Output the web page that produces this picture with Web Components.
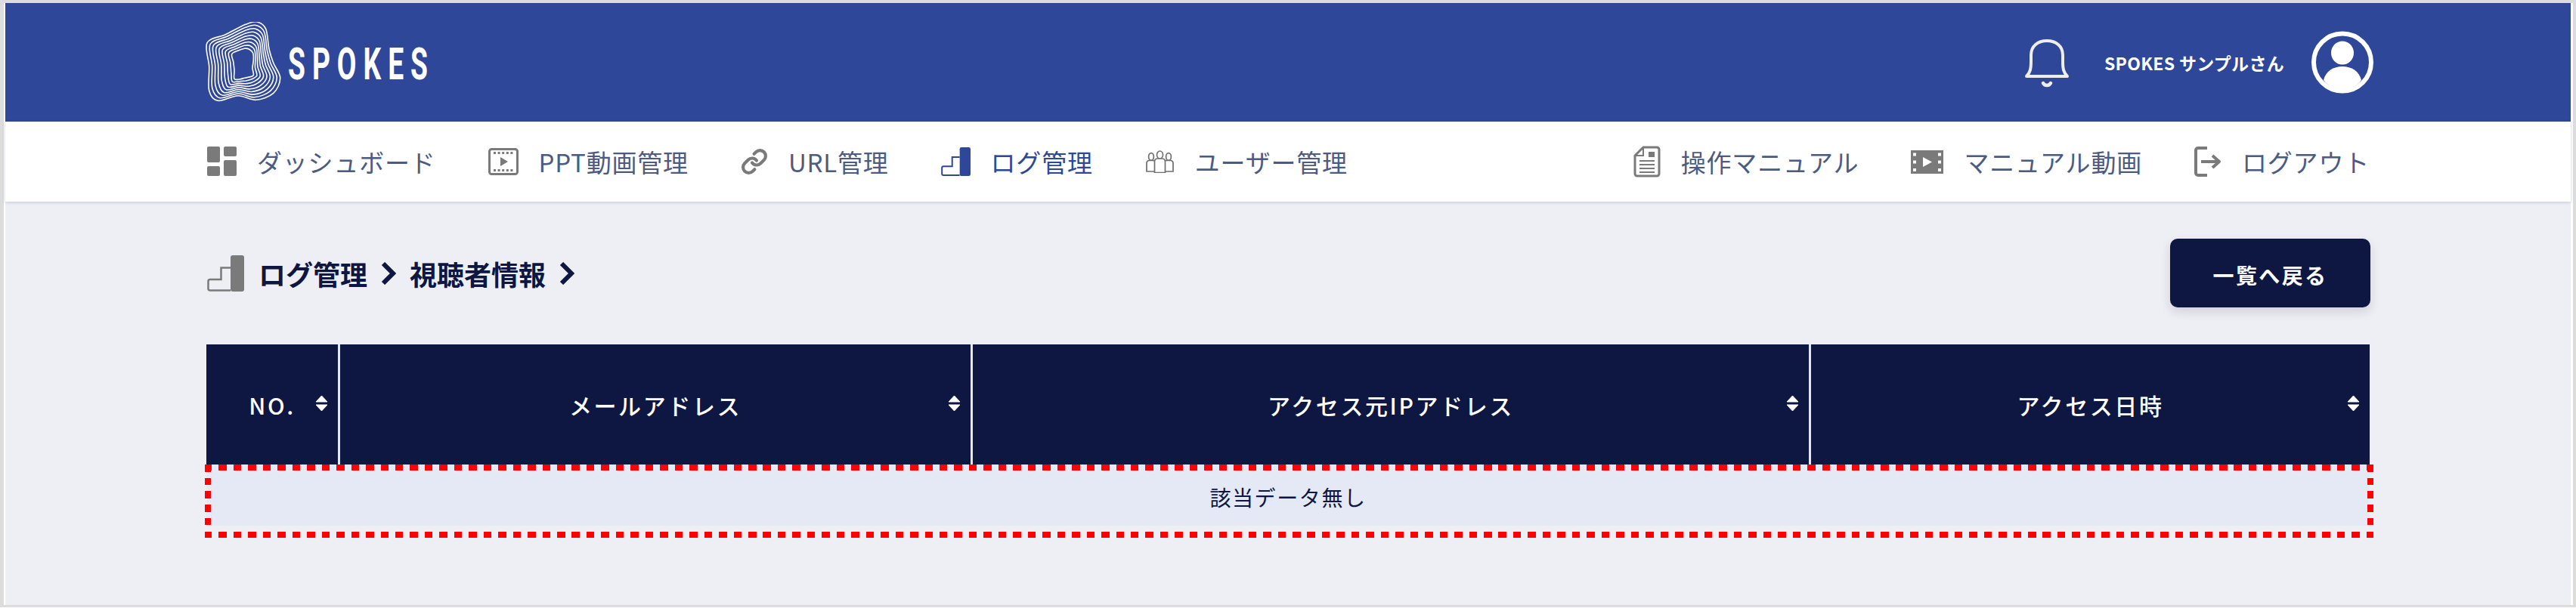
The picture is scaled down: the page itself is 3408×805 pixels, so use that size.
<!DOCTYPE html>
<html lang="ja">
<head>
<meta charset="utf-8">
<title>SPOKES</title>
<style>
    html, body {
        margin: 0;
        height: 805px;
        overflow: hidden;
        background: #fff;
        font-family: "Noto Sans CJK JP", "Noto Sans", sans-serif;
    }
</style>
</head>
<body>
<app-shell>
    <app-header></app-header>
    <app-nav>
        <nav-item icon="dashboard">ダッシュボード</nav-item>
        <nav-item icon="film">PPT動画管理</nav-item>
        <nav-item icon="link">URL管理</nav-item>
        <nav-item icon="steps" active>ログ管理</nav-item>
        <nav-item icon="users">ユーザー管理</nav-item>
        <nav-item icon="doc" slot="right">操作マニュアル</nav-item>
        <nav-item icon="video" slot="right">マニュアル動画</nav-item>
        <nav-item icon="logout" slot="right">ログアウト</nav-item>
    </app-nav>
    <log-page></log-page>
</app-shell>

<script>
const ICONS = {
    dashboard: `<svg width="39" height="40" viewBox="0 0 39 40" fill="#7a7a7a">
        <rect x="0" y="0" width="17" height="21" rx="2"/><rect x="22" y="0" width="17" height="13" rx="2"/>
        <rect x="0" y="26" width="17" height="13" rx="2"/><rect x="22" y="18" width="17" height="21" rx="2"/></svg>`,
    film: `<svg width="40" height="36" viewBox="0 0 40 36">
        <rect x="1.5" y="1.5" width="37" height="33" rx="3" fill="none" stroke="#7a7a7a" stroke-width="3"/>
        <path d="M7 6.5h26M7 29.5h26" stroke="#7a7a7a" stroke-width="3" stroke-dasharray="3 2.6"/>
        <path d="M16 12l10 6-10 6z" fill="#7a7a7a"/></svg>`,
    link: `<svg width="36" height="38" viewBox="0 0 24 25" fill="none" stroke="#7a7a7a" stroke-width="2.8" stroke-linecap="round" stroke-linejoin="round">
        <path d="M10 13.5a5 5 0 0 0 7.54.54l3-3a5 5 0 0 0-7.07-7.07l-1.72 1.71"/>
        <path d="M14 11.5a5 5 0 0 0-7.54-.54l-3 3a5 5 0 0 0 7.07 7.07l1.71-1.71"/></svg>`,
    steps: `<svg width="39" height="40" viewBox="0 0 49 48">
        <rect x="31" y="0" width="18" height="48" rx="3" fill="currentColor"/>
        <path d="M31 16.5H18.5v15.5H4a2.5 2.5 0 0 0-2.5 2.5V44A2.5 2.5 0 0 0 4 46.5h27" fill="none" stroke="currentColor" stroke-width="2.5"/></svg>`,
    users: `<svg width="39" height="30" viewBox="0 0 39 30" fill="#fff" stroke="#6f6f6f" stroke-width="1.7">
        <ellipse cx="8" cy="8.500" rx="3.400" ry="4.800"/><path d="M2 28V17q0-3 3-3.500h6q3 .5 3 3.500v11z"/>
        <ellipse cx="31" cy="8.500" rx="3.400" ry="4.800"/><path d="M25 28V17q0-3 3-3.500h6q3 .5 3 3.500v11z"/>
        <ellipse cx="19.500" cy="6" rx="4" ry="5"/><path d="M12.500 29.500V15q0-3.500 3.500-4h7q3.500 .5 3.500 4v14.500z"/></svg>`,
    doc: `<svg width="36" height="42" viewBox="0 0 36 42" fill="none" stroke="#7a7a7a">
        <path d="M13 2h18a3 3 0 0 1 3 3v32a3 3 0 0 1-3 3H5a3 3 0 0 1-3-3V13z" stroke-width="3" stroke-linejoin="round"/>
        <path d="M13 2v11H2" stroke-width="2"/>
        <rect x="20" y="8" width="8" height="7" fill="#7a7a7a" stroke="none"/>
        <path d="M8 20h20M8 25h20M8 30h20M8 35h20" stroke-width="1.800"/></svg>`,
    video: `<svg width="43" height="31" viewBox="0 0 43 31">
        <rect width="43" height="31" fill="#7a7a7a"/>
        <path d="M3 3.500h4v4H3zM3 13.500h4v4H3zM3 24h4v4H3zM36 3.500h4v4h-4zM36 13.500h4v4h-4zM36 24h4v4h-4z" fill="#fff"/>
        <path d="M16 9l12 6.500-12 6.500z" fill="#fff"/></svg>`,
    logout: `<svg width="36" height="40" viewBox="0 0 36 40" fill="none" stroke="#7a7a7a" stroke-width="4">
        <path d="M17 2H5a3 3 0 0 0-3 3v30a3 3 0 0 0 3 3h12"/>
        <path d="M9 20h22M24 12l9 8-9 8" stroke-linejoin="round"/></svg>`
};

// contour points of the logo, read off the reference (outer edge and inner hole)
const LOGO_OUTER = [[42,95],[115,62],[195,22],[240,12],[275,40],[288,120],[305,175],[332,235],[305,295],[235,322],[165,305],[85,325],[50,285],[50,190]];
const LOGO_INNER = [[140,140],[165,126],[190,118],[208,120],[224,136],[226,165],[222,195],[226,224],[205,232],[190,235],[170,240],[150,238],[150,205],[146,170]];

function logoContours(count) {
    let out = '';
    for (let c = 0; c < count; c++) {
        const t = c / (count - 1);
        const pts = LOGO_OUTER.map((p, i) => [
            (p[0] + (LOGO_INNER[i][0] - p[0]) * t) / 3 - 12,
            (p[1] + (LOGO_INNER[i][1] - p[1]) * t) / 3 - 4
        ]);
        let d = `M${pts[0][0].toFixed(1)} ${pts[0][1].toFixed(1)}`;
        const n = pts.length;
        for (let i = 0; i < n; i++) {
            const p0 = pts[(i + n - 1) % n], p1 = pts[i], p2 = pts[(i + 1) % n], p3 = pts[(i + 2) % n];
            const c1 = [p1[0] + (p2[0] - p0[0]) / 6, p1[1] + (p2[1] - p0[1]) / 6];
            const c2 = [p2[0] - (p3[0] - p1[0]) / 6, p2[1] - (p3[1] - p1[1]) / 6];
            d += `C${c1[0].toFixed(1)} ${c1[1].toFixed(1)} ${c2[0].toFixed(1)} ${c2[1].toFixed(1)} ${p2[0].toFixed(1)} ${p2[1].toFixed(1)}`;
        }
        out += `<path d="${d}z"/>`;
    }
    return out;
}

class AppShell extends HTMLElement {
    constructor() {
        super();
        this.attachShadow({ mode: 'open' });
        this.shadowRoot.innerHTML = `
            <style>
                :host {
                    display: flex;
                    flex-direction: column;
                    box-sizing: border-box;
                    height: 804px;
                    background: #fff;
                    padding: 0 3px 0 2px;
                    border-top: 4px solid #dcdcdc;
                    border-left: 5px solid #dcdcdc;
                    border-right: 4px solid #dcdcdc;
                    border-bottom: 3px solid #dcdcdc;
                }
            </style>
            <slot></slot>
        `;
    }
}

class AppHeader extends HTMLElement {
    constructor() {
        super();
        this.attachShadow({ mode: 'open' });
        this.shadowRoot.innerHTML = `
            <style>
                :host {
                    display: flex;
                    align-items: center;
                    flex: none;
                    height: 157px;
                    background: #2f4799;
                    color: #fff;
                    padding: 0 261px 0 265px;
                }
                .logo {
                    display: flex;
                    align-items: center;
                    margin-top: -2px;
                }
                .word {
                    width: 192px;
                    margin-left: 9px;
                    margin-top: 6px;
                    white-space: nowrap;
                }
                .word span {
                    display: inline-block;
                    font-family: Roboto, sans-serif;
                    font-weight: 700;
                    font-size: 60px;
                    line-height: 60px;
                    letter-spacing: 14.500px;
                    transform: scaleX(0.62);
                    transform-origin: left center;
                }
                .user {
                    margin-left: auto;
                    display: flex;
                    align-items: center;
                }
                .name {
                    font-size: 23px;
                    font-weight: 700;
                    letter-spacing: 0.3px;
                    margin: 0 36px 0 46px;
                    white-space: nowrap;
                }
                svg { display: block; }
            </style>
            <div class="logo">
                <svg width="100" height="106" viewBox="0 0 100 106" fill="none" stroke="#fff" stroke-width="1.600">${logoContours(9)}</svg>
                <div class="word"><span>SPOKES</span></div>
            </div>
            <div class="user">
                <svg width="60" height="66" viewBox="0 0 60 66" fill="none" stroke="#eee" stroke-width="4" style="margin-top:5px">
                    <path d="M3 49c5-5 6-10 6-20V21C9 9 18 2 30 2s21 7 21 19v8c0 10 1 15 6 20z" stroke-linejoin="round"/>
                    <path d="M25 58c2 4 8 4 10 0" stroke-width="4.500" stroke-linecap="round"/>
                </svg>
                <span class="name">SPOKES サンプルさん</span>
                <svg width="82" height="83" viewBox="0 0 82 83">
                    <circle cx="41" cy="41.500" r="38" fill="none" stroke="#fff" stroke-width="6"/>
                    <ellipse cx="41" cy="29" rx="15" ry="15.500" fill="#fff"/>
                    <path d="M16 65c3-12 13-18 25-18s22 6 25 18c-7 9-15 13-25 13s-18-4-25-13z" fill="#fff"/>
                </svg>
            </div>
        `;
    }
}

class AppNav extends HTMLElement {
    constructor() {
        super();
        this.attachShadow({ mode: 'open' });
        this.shadowRoot.innerHTML = `
            <style>
                :host {
                    display: flex;
                    align-items: center;
                    justify-content: space-between;
                    flex: none;
                    height: 106px;
                    background: #fff;
                    padding: 0 266px 0 267px;
                    box-shadow: 0 1px 4px rgba(30, 40, 90, 0.22);
                    position: relative;
                }
                .group {
                    display: flex;
                    align-items: center;
                    gap: 69px;
                }
            </style>
            <div class="group"><slot></slot></div>
            <div class="group"><slot name="right"></slot></div>
        `;
    }
}

class NavItem extends HTMLElement {
    constructor() {
        super();
        this.attachShadow({ mode: 'open' });
    }

    connectedCallback() {
        const icon = ICONS[this.getAttribute('icon')] || '';
        this.shadowRoot.innerHTML = `
            <style>
                :host {
                    display: flex;
                    align-items: center;
                    gap: 27px;
                    font-size: 33px;
                    line-height: 40px;
                    letter-spacing: 0.800px;
                    color: #4c5b82;
                    white-space: nowrap;
                }
                :host([active]) {
                    color: #2f4799;
                }
                svg { display: block; }
            </style>
            ${icon}
            <slot></slot>
        `;
    }
}

class LogBreadcrumb extends HTMLElement {
    constructor() {
        super();
        this.attachShadow({ mode: 'open' });
        const chevron = `<svg width="20" height="30" viewBox="0 0 20 30" fill="none" stroke="#0e1642" stroke-width="6" stroke-linejoin="miter"><path d="M3 2l13 13L3 28"/></svg>`;
        this.shadowRoot.innerHTML = `
            <style>
                :host {
                    display: flex;
                    align-items: center;
                    gap: 18px;
                    font-size: 36px;
                    line-height: 48px;
                    font-weight: 700;
                    color: #0e1642;
                    margin-left: 1px;
                }
                svg { display: block; }
                .icon { color: #7a7a7a; margin-right: 1px; }
            </style>
            <svg class="icon" width="49" height="48" viewBox="0 0 49 48">
                <rect x="31" y="0" width="18" height="48" rx="3" fill="currentColor"/>
                <path d="M31 16.500H18.500v15.500H4a2.500 2.500 0 0 0-2.500 2.500V44A2.500 2.500 0 0 0 4 46.500h27" fill="none" stroke="currentColor" stroke-width="2.500"/>
            </svg>
            <span>ログ管理</span>
            ${chevron}
            <span>視聴者情報</span>
            ${chevron}
        `;
    }
}

class SortIcon extends HTMLElement {
    constructor() {
        super();
        this.attachShadow({ mode: 'open' });
        this.shadowRoot.innerHTML = `
            <style>
                :host { display: block; width: 17px; height: 22px; margin-top: -3px; }
                svg { display: block; }
            </style>
            <svg width="17" height="22" viewBox="0 0 17 22" fill="#fff" stroke="#fff" stroke-width="1" stroke-linejoin="round">
                <path d="M8.500 1L16 9H1z"/><path d="M1 13h15l-7.500 8z"/>
            </svg>
        `;
    }
}

class LogTable extends HTMLElement {
    constructor() {
        super();
        this.attachShadow({ mode: 'open' });
        const heads = ['NO.', 'メールアドレス', 'アクセス元IPアドレス', 'アクセス日時'];
        this.shadowRoot.innerHTML = `
            <style>
                :host {
                    display: block;
                    width: 2862px;
                }
                .head {
                    display: grid;
                    grid-template-columns: 174px 834px 1106px 739px;
                    column-gap: 3px;
                    background: #e4e6f0;
                }
                .cell {
                    display: grid;
                    grid-template-columns: 1fr auto 1fr;
                    align-items: center;
                    height: 159px;
                    padding: 0 13px;
                    box-sizing: border-box;
                    background: #0e1642;
                    color: #fff;
                    font-size: 30px;
                    font-weight: 500;
                    letter-spacing: 2.600px;
                    white-space: nowrap;
                }
                .cell span {
                    grid-column: 2;
                }
                .cell sort-icon {
                    grid-column: 3;
                    justify-self: end;
                }
                .row {
                    position: relative;
                    height: 81px;
                    display: flex;
                    align-items: center;
                    justify-content: center;
                    background: #e5e8f5;
                    color: #0e1642;
                    font-size: 28px;
                    letter-spacing: 1.600px;
                    padding-top: 4px;
                    box-sizing: border-box;
                }
                /* red dotted highlight drawn over the empty row */
                .mark {
                    position: absolute;
                    left: -2px;
                    right: -5px;
                    top: 0;
                    bottom: -16px;
                    pointer-events: none;
                    background:
                        repeating-linear-gradient(90deg, #f00 0 10.500px, transparent 10.500px 19.460px) left -1px top 0 / 100% 8px no-repeat,
                        repeating-linear-gradient(90deg, #f00 0 10.500px, transparent 10.500px 19.460px) left -1px bottom 0 / 100% 8px no-repeat,
                        repeating-linear-gradient(180deg, #f00 0 9.500px, transparent 9.500px 17.700px) left 0 top 0 / 8px 100% no-repeat,
                        repeating-linear-gradient(180deg, #f00 0 9.500px, transparent 9.500px 17.700px) right 0 top 0 / 8px 100% no-repeat;
                }
            </style>
            <div class="head">
                ${heads.map(h => `<div class="cell"><span>${h}</span><sort-icon></sort-icon></div>`).join('')}
            </div>
            <div class="row">該当データ無し<div class="mark"></div></div>
        `;
    }
}

class LogPage extends HTMLElement {
    constructor() {
        super();
        this.attachShadow({ mode: 'open' });
        this.shadowRoot.innerHTML = `
            <style>
                :host {
                    display: block;
                    flex: 1;
                    background: #eeeff4;
                    padding: 49px 0 0 266px;
                }
                .bar {
                    display: flex;
                    align-items: center;
                    justify-content: space-between;
                    width: 2863px;
                    margin-bottom: 49px;
                }
                .back {
                    display: flex;
                    align-items: center;
                    justify-content: center;
                    width: 265px;
                    height: 91px;
                    border-radius: 10px;
                    background: #0e1642;
                    color: #fff;
                    font-size: 28px;
                    font-weight: 700;
                    letter-spacing: 2.400px;
                    box-shadow: 0 6px 14px rgba(20, 30, 80, 0.14);
                    padding-top: 4px;
                    box-sizing: border-box;
                }
            </style>
            <div class="bar">
                <log-breadcrumb></log-breadcrumb>
                <div class="back">一覧へ戻る</div>
            </div>
            <log-table></log-table>
        `;
    }
}

customElements.define('app-shell', AppShell);
customElements.define('app-header', AppHeader);
customElements.define('app-nav', AppNav);
customElements.define('nav-item', NavItem);
customElements.define('log-breadcrumb', LogBreadcrumb);
customElements.define('sort-icon', SortIcon);
customElements.define('log-table', LogTable);
customElements.define('log-page', LogPage);
</script>
</body>
</html>
